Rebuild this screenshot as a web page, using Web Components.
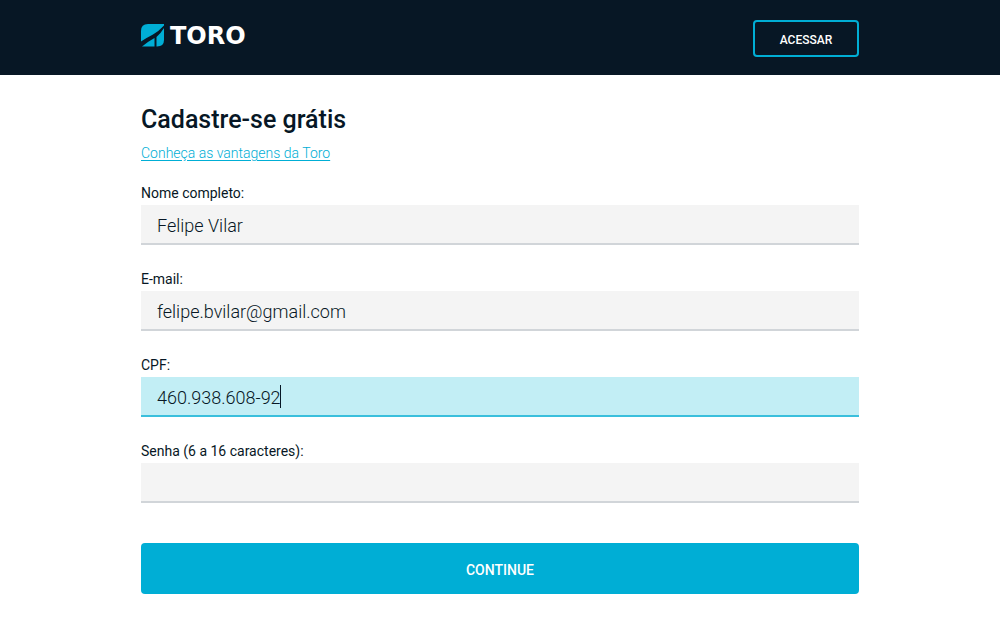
<!DOCTYPE html>
<html lang="pt-BR">
<head>
<meta charset="utf-8">
<meta name="viewport" content="width=device-width, initial-scale=1">
<title>Toro - Cadastre-se</title>
<style>
  :root { --navy: #071725; --cyan: #00aed5; }
  body { margin: 0; background: #fff; color: var(--navy); font-family: Roboto, "Liberation Sans", sans-serif; }
</style>
</head>
<body>
<toro-page></toro-page>
<script>
const define = (name, html, setup) => {
  const template = document.createElement('template');
  template.innerHTML = html;
  customElements.define(name, class extends HTMLElement {
    constructor() {
      super();
      this.attachShadow({ mode: 'open' }).append(template.content.cloneNode(true));
    }
    connectedCallback() { if (setup) setup(this, this.shadowRoot); }
  });
};

define('toro-logo', `
  <style>
    :host { display: block; }
    a { display: flex; align-items: center; gap: 6px; color: #fff; text-decoration: none;
        font: 700 24px/24px "DejaVu Sans", sans-serif; }
    svg { display: block; }
  </style>
  <a href="#"><svg width="23" height="23" viewBox="0 0 23 23" aria-hidden="true">
    <path fill="#00aed5" d="M0 17.500V7Q0 0 7 0H23V1.500Q18 7 12 10.500Q7 13 0 17.500Z"/>
    <path fill="#00aed5" d="M23 4V16Q23 22.500 16 22.500H15.500V13Q20 9 23 4Z"/>
    <path fill="#00aed5" d="M1 22.500Q7 17.500 13.500 14V22.500Z"/>
  </svg><span>TORO</span></a>`);

define('toro-header', `
  <style>
    :host { display: block; background: var(--navy); }
    header { box-sizing: border-box; max-width: 750px; min-height: 75px; margin: 0 auto; padding: 2px 16px 0;
      display: flex; align-items: center; justify-content: space-between; }
    toro-logo { padding-bottom: 6px; }
    button { box-sizing: border-box; height: 37px; min-width: 106px; padding: 2px 24px 0; border: 2px solid var(--cyan);
      border-radius: 4px; background: transparent; color: #fff; font: 500 12px/16px Roboto, sans-serif; }
  </style>
  <header><toro-logo></toro-logo><button type="button">ACESSAR</button></header>`);

define('toro-field', `
  <style>
    :host { display: block; }
    label { display: block; font-size: 14px; line-height: 24px; }
    .box { position: relative; }
    input { display: block; box-sizing: border-box; width: 100%; height: 40px; margin: 0; padding: 2px 16px 0;
      border: 0; border-bottom: 2px solid #d1d5d9; border-radius: 0; outline: 0; background: #f4f4f4;
      color: var(--navy); caret-color: transparent; font: 300 18px/24px Roboto, sans-serif; }
    .caret { display: none; position: absolute; top: 8px; width: 1px; height: 23px; background: var(--navy); }
    :host([active]) input { background: #c2eef5; border-color: #3abfdc; }
    :host([active]) .caret { display: block; }
  </style>
  <label for="input"></label>
  <div class="box"><input id="input"><span class="caret"></span></div>`,
  (host, root) => {
    const input = root.querySelector('input');
    root.querySelector('label').textContent = host.getAttribute('label');
    input.type = host.getAttribute('type') || 'text';
    input.value = host.getAttribute('value') || '';
    const place = () => {
      const pen = document.createElement('canvas').getContext('2d');
      pen.font = '300 18px Roboto, sans-serif';
      const end = input.type === 'text' ? input.selectionStart : input.value.length;
      root.querySelector('.caret').style.left =
        16 + Math.floor(pen.measureText(input.value.slice(0, end)).width) + 'px';
    };
    place();
    input.addEventListener('focus', () => {
      host.parentNode.querySelectorAll('toro-field').forEach(f => f.toggleAttribute('active', f === host));
      place();
    });
    ['input', 'keyup', 'click'].forEach(type => input.addEventListener(type, place));
  });

define('toro-signup', `
  <style>
    :host { display: block; box-sizing: border-box; max-width: 750px; margin: 0 auto; padding: 29px 16px 40px; }
    h1 { margin: 0 0 7px; font-size: 25px; line-height: 32px; font-weight: 500; }
    a { display: block; width: fit-content; margin-bottom: 18px; color: var(--cyan);
      font-size: 14px; line-height: 20px; font-weight: 300; text-underline-offset: 2px; }
    form { display: grid; gap: 22px; }
    button { height: 51px; margin-top: 18px; padding: 2px 16px 0; border: 0; border-radius: 4px;
      background: var(--cyan); color: #fff; font: 500 14px/20px Roboto, sans-serif; }
  </style>
  <h1>Cadastre-se grátis</h1>
  <a href="#">Conheça as vantagens da Toro</a>
  <form>
    <toro-field label="Nome completo:" value="Felipe Vilar"></toro-field>
    <toro-field label="E-mail:" value="felipe.bvilar@gmail.com"></toro-field>
    <toro-field label="CPF:" value="460.938.608-92" active></toro-field>
    <toro-field label="Senha (6 a 16 caracteres):" type="password"></toro-field>
    <button type="button">CONTINUE</button>
  </form>`);

define('toro-page', `
  <style>:host { display: block; } main { display: block; }</style>
  <toro-header></toro-header>
  <main><toro-signup></toro-signup></main>`);
</script>
</body>
</html>
